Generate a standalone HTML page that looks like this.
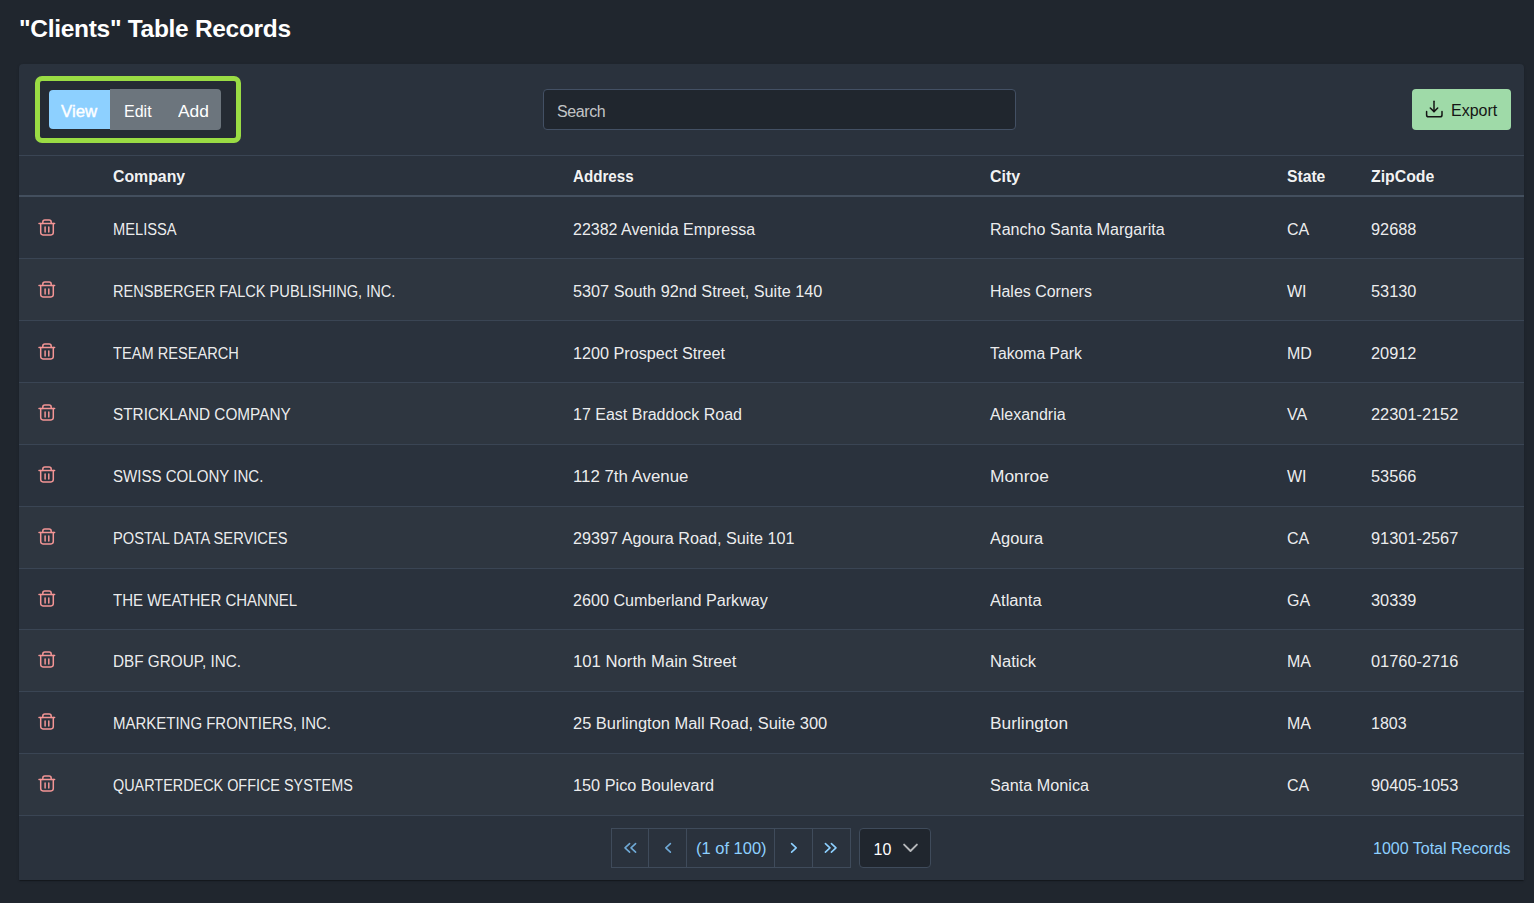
<!DOCTYPE html>
<html><head><meta charset="utf-8"><style>
html,body{margin:0;padding:0;}
body{width:1534px;height:903px;background:#20262e;font-family:"Liberation Sans",sans-serif;position:relative;overflow:hidden;color:rgba(255,255,255,0.93);}
.a{position:absolute;white-space:nowrap;line-height:20px;height:20px;font-size:16px;}
.b{font-weight:700;}
.card{position:absolute;left:19px;top:64px;width:1505px;height:816px;background:#2a323d;border-radius:4px 4px 0 0;box-shadow:0 2px 1px -1px rgba(0,0,0,0.2),0 1px 1px 0 rgba(0,0,0,0.14),0 1px 3px 0 rgba(0,0,0,0.12);}
.hl{position:absolute;left:19px;width:1505px;height:1px;background:#3a4554;}
.stripe{position:absolute;left:19px;width:1505px;background:rgba(255,255,255,0.02);}
.ic{position:absolute;}
</style></head><body>

<div class="a b" style="left:19px;top:14.40px;font-size:24.5px;line-height:30px;height:30px;color:#fff;letter-spacing:-0.3px">&quot;Clients&quot; Table Records</div>
<div class="card"></div>
<div style="position:absolute;left:35px;top:76px;width:196px;height:57px;border:5px solid #9adc44;border-radius:7px;background:#252b34;"></div>
<div style="position:absolute;left:49px;top:90px;width:61px;height:39px;background:#8dd0ff;border-radius:4px 0 0 4px;"></div>
<div style="position:absolute;left:110px;top:89px;width:111px;height:41px;background:#6c757d;border-radius:0 4px 4px 0;"></div>
<div class="a" style="left:61px;top:101.50px;color:#fff;-webkit-text-stroke:0.4px #fff;transform:scaleX(1.05);transform-origin:0 0">View</div>
<div class="a" style="left:124px;top:101.50px;color:#fff;transform:scaleX(1.0);transform-origin:0 0">Edit</div>
<div class="a" style="left:177.5px;top:101.50px;color:#fff;transform:scaleX(1.085);transform-origin:0 0">Add</div>
<div style="position:absolute;left:543px;top:89px;width:471px;height:39px;border:1px solid #435064;border-radius:4px;background:#20262e;"></div>
<div class="a" style="left:557px;top:101.60px;color:rgba(255,255,255,0.74);letter-spacing:-0.4px">Search</div>
<div style="position:absolute;left:1412px;top:89px;width:99px;height:41px;background:#9fdaa8;border-radius:4px;"></div>
<svg class="ic" style="left:1424px;top:99px" width="20" height="20" viewBox="0 0 20 20" fill="none" stroke="#151515" stroke-width="1.5" stroke-linecap="round" stroke-linejoin="round"><path d="M10 2.2V12.6"/><path d="M6.3 9.0L10 12.6L13.7 9.0"/><path d="M2.6 12.4V15.9Q2.6 17.8 4.5 17.8H16.1Q18 17.8 18 15.9V12.4"/></svg>
<div class="a" style="left:1451px;top:101.40px;color:#151515">Export</div>
<div class="hl" style="top:155px"></div>
<div class="hl" style="top:195px;height:2px;background:#434f5e"></div>
<div class="a b" style="left:113px;top:166.80px;color:rgba(255,255,255,0.96);transform:scaleX(0.99);transform-origin:0 0">Company</div>
<div class="a b" style="left:573px;top:166.80px;color:rgba(255,255,255,0.96);transform:scaleX(0.947);transform-origin:0 0">Address</div>
<div class="a b" style="left:990px;top:166.80px;color:rgba(255,255,255,0.96);transform:scaleX(1);transform-origin:0 0">City</div>
<div class="a b" style="left:1287px;top:166.80px;color:rgba(255,255,255,0.96);transform:scaleX(0.98);transform-origin:0 0">State</div>
<div class="a b" style="left:1371px;top:166.80px;color:rgba(255,255,255,0.96);transform:scaleX(0.99);transform-origin:0 0">ZipCode</div>
<div class="hl" style="top:258px"></div>
<div class="ic" style="left:37px;top:218px;width:20px;height:20px"><svg width="20" height="20" viewBox="0 0 20 20" fill="none" stroke="#f39595" stroke-width="1.5" stroke-linecap="round" stroke-linejoin="round"><path d="M2.0 5.6H17.6"/><path d="M5.8 5.6V4.2Q5.8 2.1 7.9 2.1H12.1Q14.2 2.1 14.2 4.2V5.6"/><path d="M3.7 5.6V14.6Q3.7 16.9 6 16.9H14Q16.3 16.9 16.3 14.6V5.6"/><path d="M8.1 9.0V14.1M11.8 9.0V14.1"/></svg></div>
<div class="a" style="left:113px;top:220px;transform:scaleX(0.9170);transform-origin:0 0;">MELISSA</div>
<div class="a" style="left:573px;top:220px;">22382 Avenida Empressa</div>
<div class="a" style="left:990px;top:220px;transform:scaleX(1.0070);transform-origin:0 0;">Rancho Santa Margarita</div>
<div class="a" style="left:1287px;top:220px;">CA</div>
<div class="a" style="left:1371px;top:220px;transform:scaleX(1.0200);transform-origin:0 0;">92688</div>
<div class="stripe" style="top:259px;height:61px"></div>
<div class="hl" style="top:320px"></div>
<div class="ic" style="left:37px;top:280px;width:20px;height:20px"><svg width="20" height="20" viewBox="0 0 20 20" fill="none" stroke="#f39595" stroke-width="1.5" stroke-linecap="round" stroke-linejoin="round"><path d="M2.0 5.6H17.6"/><path d="M5.8 5.6V4.2Q5.8 2.1 7.9 2.1H12.1Q14.2 2.1 14.2 4.2V5.6"/><path d="M3.7 5.6V14.6Q3.7 16.9 6 16.9H14Q16.3 16.9 16.3 14.6V5.6"/><path d="M8.1 9.0V14.1M11.8 9.0V14.1"/></svg></div>
<div class="a" style="left:113px;top:282px;transform:scaleX(0.9127);transform-origin:0 0;">RENSBERGER FALCK PUBLISHING, INC.</div>
<div class="a" style="left:573px;top:282px;transform:scaleX(1.0155);transform-origin:0 0;">5307 South 92nd Street, Suite 140</div>
<div class="a" style="left:990px;top:282px;transform:scaleX(0.9960);transform-origin:0 0;">Hales Corners</div>
<div class="a" style="left:1287px;top:282px;">WI</div>
<div class="a" style="left:1371px;top:282px;transform:scaleX(1.0200);transform-origin:0 0;">53130</div>
<div class="hl" style="top:382px"></div>
<div class="ic" style="left:37px;top:342px;width:20px;height:20px"><svg width="20" height="20" viewBox="0 0 20 20" fill="none" stroke="#f39595" stroke-width="1.5" stroke-linecap="round" stroke-linejoin="round"><path d="M2.0 5.6H17.6"/><path d="M5.8 5.6V4.2Q5.8 2.1 7.9 2.1H12.1Q14.2 2.1 14.2 4.2V5.6"/><path d="M3.7 5.6V14.6Q3.7 16.9 6 16.9H14Q16.3 16.9 16.3 14.6V5.6"/><path d="M8.1 9.0V14.1M11.8 9.0V14.1"/></svg></div>
<div class="a" style="left:113px;top:344px;transform:scaleX(0.9130);transform-origin:0 0;">TEAM RESEARCH</div>
<div class="a" style="left:573px;top:344px;transform:scaleX(1.0120);transform-origin:0 0;">1200 Prospect Street</div>
<div class="a" style="left:990px;top:344px;transform:scaleX(0.9850);transform-origin:0 0;">Takoma Park</div>
<div class="a" style="left:1287px;top:344px;">MD</div>
<div class="a" style="left:1371px;top:344px;transform:scaleX(1.0200);transform-origin:0 0;">20912</div>
<div class="stripe" style="top:383px;height:61px"></div>
<div class="hl" style="top:444px"></div>
<div class="ic" style="left:37px;top:403px;width:20px;height:20px"><svg width="20" height="20" viewBox="0 0 20 20" fill="none" stroke="#f39595" stroke-width="1.5" stroke-linecap="round" stroke-linejoin="round"><path d="M2.0 5.6H17.6"/><path d="M5.8 5.6V4.2Q5.8 2.1 7.9 2.1H12.1Q14.2 2.1 14.2 4.2V5.6"/><path d="M3.7 5.6V14.6Q3.7 16.9 6 16.9H14Q16.3 16.9 16.3 14.6V5.6"/><path d="M8.1 9.0V14.1M11.8 9.0V14.1"/></svg></div>
<div class="a" style="left:113px;top:405px;transform:scaleX(0.9580);transform-origin:0 0;">STRICKLAND COMPANY</div>
<div class="a" style="left:573px;top:405px;">17 East Braddock Road</div>
<div class="a" style="left:990px;top:405px;">Alexandria</div>
<div class="a" style="left:1287px;top:405px;">VA</div>
<div class="a" style="left:1371px;top:405px;transform:scaleX(1.0220);transform-origin:0 0;">22301-2152</div>
<div class="hl" style="top:506px"></div>
<div class="ic" style="left:37px;top:465px;width:20px;height:20px"><svg width="20" height="20" viewBox="0 0 20 20" fill="none" stroke="#f39595" stroke-width="1.5" stroke-linecap="round" stroke-linejoin="round"><path d="M2.0 5.6H17.6"/><path d="M5.8 5.6V4.2Q5.8 2.1 7.9 2.1H12.1Q14.2 2.1 14.2 4.2V5.6"/><path d="M3.7 5.6V14.6Q3.7 16.9 6 16.9H14Q16.3 16.9 16.3 14.6V5.6"/><path d="M8.1 9.0V14.1M11.8 9.0V14.1"/></svg></div>
<div class="a" style="left:113px;top:467px;transform:scaleX(0.9415);transform-origin:0 0;">SWISS COLONY INC.</div>
<div class="a" style="left:573px;top:467px;transform:scaleX(1.0520);transform-origin:0 0;">112 7th Avenue</div>
<div class="a" style="left:990px;top:467px;transform:scaleX(1.0850);transform-origin:0 0;">Monroe</div>
<div class="a" style="left:1287px;top:467px;">WI</div>
<div class="a" style="left:1371px;top:467px;transform:scaleX(1.0200);transform-origin:0 0;">53566</div>
<div class="stripe" style="top:507px;height:61px"></div>
<div class="hl" style="top:568px"></div>
<div class="ic" style="left:37px;top:527px;width:20px;height:20px"><svg width="20" height="20" viewBox="0 0 20 20" fill="none" stroke="#f39595" stroke-width="1.5" stroke-linecap="round" stroke-linejoin="round"><path d="M2.0 5.6H17.6"/><path d="M5.8 5.6V4.2Q5.8 2.1 7.9 2.1H12.1Q14.2 2.1 14.2 4.2V5.6"/><path d="M3.7 5.6V14.6Q3.7 16.9 6 16.9H14Q16.3 16.9 16.3 14.6V5.6"/><path d="M8.1 9.0V14.1M11.8 9.0V14.1"/></svg></div>
<div class="a" style="left:113px;top:529px;transform:scaleX(0.9170);transform-origin:0 0;">POSTAL DATA SERVICES</div>
<div class="a" style="left:573px;top:529px;transform:scaleX(1.0120);transform-origin:0 0;">29397 Agoura Road, Suite 101</div>
<div class="a" style="left:990px;top:529px;transform:scaleX(1.0290);transform-origin:0 0;">Agoura</div>
<div class="a" style="left:1287px;top:529px;">CA</div>
<div class="a" style="left:1371px;top:529px;transform:scaleX(1.0220);transform-origin:0 0;">91301-2567</div>
<div class="hl" style="top:629px"></div>
<div class="ic" style="left:37px;top:589px;width:20px;height:20px"><svg width="20" height="20" viewBox="0 0 20 20" fill="none" stroke="#f39595" stroke-width="1.5" stroke-linecap="round" stroke-linejoin="round"><path d="M2.0 5.6H17.6"/><path d="M5.8 5.6V4.2Q5.8 2.1 7.9 2.1H12.1Q14.2 2.1 14.2 4.2V5.6"/><path d="M3.7 5.6V14.6Q3.7 16.9 6 16.9H14Q16.3 16.9 16.3 14.6V5.6"/><path d="M8.1 9.0V14.1M11.8 9.0V14.1"/></svg></div>
<div class="a" style="left:113px;top:591px;transform:scaleX(0.9390);transform-origin:0 0;">THE WEATHER CHANNEL</div>
<div class="a" style="left:573px;top:591px;transform:scaleX(1.0100);transform-origin:0 0;">2600 Cumberland Parkway</div>
<div class="a" style="left:990px;top:591px;transform:scaleX(1.0360);transform-origin:0 0;">Atlanta</div>
<div class="a" style="left:1287px;top:591px;">GA</div>
<div class="a" style="left:1371px;top:591px;transform:scaleX(1.0200);transform-origin:0 0;">30339</div>
<div class="stripe" style="top:630px;height:61px"></div>
<div class="hl" style="top:691px"></div>
<div class="ic" style="left:37px;top:650px;width:20px;height:20px"><svg width="20" height="20" viewBox="0 0 20 20" fill="none" stroke="#f39595" stroke-width="1.5" stroke-linecap="round" stroke-linejoin="round"><path d="M2.0 5.6H17.6"/><path d="M5.8 5.6V4.2Q5.8 2.1 7.9 2.1H12.1Q14.2 2.1 14.2 4.2V5.6"/><path d="M3.7 5.6V14.6Q3.7 16.9 6 16.9H14Q16.3 16.9 16.3 14.6V5.6"/><path d="M8.1 9.0V14.1M11.8 9.0V14.1"/></svg></div>
<div class="a" style="left:113px;top:652px;transform:scaleX(0.9560);transform-origin:0 0;">DBF GROUP, INC.</div>
<div class="a" style="left:573px;top:652px;transform:scaleX(1.0440);transform-origin:0 0;">101 North Main Street</div>
<div class="a" style="left:990px;top:652px;transform:scaleX(1.0380);transform-origin:0 0;">Natick</div>
<div class="a" style="left:1287px;top:652px;">MA</div>
<div class="a" style="left:1371px;top:652px;transform:scaleX(1.0220);transform-origin:0 0;">01760-2716</div>
<div class="hl" style="top:753px"></div>
<div class="ic" style="left:37px;top:712px;width:20px;height:20px"><svg width="20" height="20" viewBox="0 0 20 20" fill="none" stroke="#f39595" stroke-width="1.5" stroke-linecap="round" stroke-linejoin="round"><path d="M2.0 5.6H17.6"/><path d="M5.8 5.6V4.2Q5.8 2.1 7.9 2.1H12.1Q14.2 2.1 14.2 4.2V5.6"/><path d="M3.7 5.6V14.6Q3.7 16.9 6 16.9H14Q16.3 16.9 16.3 14.6V5.6"/><path d="M8.1 9.0V14.1M11.8 9.0V14.1"/></svg></div>
<div class="a" style="left:113px;top:714px;transform:scaleX(0.9360);transform-origin:0 0;">MARKETING FRONTIERS, INC.</div>
<div class="a" style="left:573px;top:714px;transform:scaleX(1.0280);transform-origin:0 0;">25 Burlington Mall Road, Suite 300</div>
<div class="a" style="left:990px;top:714px;transform:scaleX(1.0830);transform-origin:0 0;">Burlington</div>
<div class="a" style="left:1287px;top:714px;">MA</div>
<div class="a" style="left:1371px;top:714px;">1803</div>
<div class="stripe" style="top:754px;height:61px"></div>
<div class="hl" style="top:815px"></div>
<div class="ic" style="left:37px;top:774px;width:20px;height:20px"><svg width="20" height="20" viewBox="0 0 20 20" fill="none" stroke="#f39595" stroke-width="1.5" stroke-linecap="round" stroke-linejoin="round"><path d="M2.0 5.6H17.6"/><path d="M5.8 5.6V4.2Q5.8 2.1 7.9 2.1H12.1Q14.2 2.1 14.2 4.2V5.6"/><path d="M3.7 5.6V14.6Q3.7 16.9 6 16.9H14Q16.3 16.9 16.3 14.6V5.6"/><path d="M8.1 9.0V14.1M11.8 9.0V14.1"/></svg></div>
<div class="a" style="left:113px;top:776px;transform:scaleX(0.9000);transform-origin:0 0;">QUARTERDECK OFFICE SYSTEMS</div>
<div class="a" style="left:573px;top:776px;transform:scaleX(1.0170);transform-origin:0 0;">150 Pico Boulevard</div>
<div class="a" style="left:990px;top:776px;transform:scaleX(1.0120);transform-origin:0 0;">Santa Monica</div>
<div class="a" style="left:1287px;top:776px;">CA</div>
<div class="a" style="left:1371px;top:776px;transform:scaleX(1.0220);transform-origin:0 0;">90405-1053</div>
<div style="position:absolute;left:611px;top:828px;width:238px;height:38px;border:1px solid #3f4b5b;"></div>
<div style="position:absolute;left:648px;top:828px;width:1px;height:40px;background:#3f4b5b"></div>
<div style="position:absolute;left:686px;top:828px;width:1px;height:40px;background:#3f4b5b"></div>
<div style="position:absolute;left:774px;top:828px;width:1px;height:40px;background:#3f4b5b"></div>
<div style="position:absolute;left:812px;top:828px;width:1px;height:40px;background:#3f4b5b"></div>
<svg class="ic" style="left:620px;top:838px" width="20" height="20" viewBox="0 0 20 20" fill="none" stroke="#6fa9d6" stroke-width="1.6" stroke-linecap="round" stroke-linejoin="round"><path d="M9.6 5.6L5 9.8L9.6 14.1"/><path d="M15.6 5.6L11 9.8L15.6 14.1"/></svg>
<svg class="ic" style="left:658px;top:838px" width="20" height="20" viewBox="0 0 20 20" fill="none" stroke="#6fa9d6" stroke-width="1.6" stroke-linecap="round" stroke-linejoin="round"><path d="M12.4 5.6L7.8 9.8L12.4 14.1"/></svg>
<svg class="ic" style="left:784px;top:838px" width="20" height="20" viewBox="0 0 20 20" fill="none" stroke="#8dd0ff" stroke-width="1.6" stroke-linecap="round" stroke-linejoin="round"><path d="M7.6 5.6L12.2 9.8L7.6 14.1"/></svg>
<svg class="ic" style="left:821px;top:838px" width="20" height="20" viewBox="0 0 20 20" fill="none" stroke="#8dd0ff" stroke-width="1.6" stroke-linecap="round" stroke-linejoin="round"><path d="M4.4 5.6L9 9.8L4.4 14.1"/><path d="M10.4 5.6L15 9.8L10.4 14.1"/></svg>
<div class="a" style="left:695.5px;top:839.00px;color:#8dd0ff;transform:scaleX(1.03);transform-origin:0 0">(1 of 100)</div>
<div style="position:absolute;left:859px;top:828px;width:70px;height:38px;border:1px solid #3f4b5b;border-radius:4px;background:#20262e"></div>
<div class="a" style="left:873.5px;top:840.00px;color:#fff">10</div>
<svg class="ic" style="left:900px;top:838px" width="20" height="20" viewBox="0 0 20 20" fill="none" stroke="rgba(255,255,255,0.68)" stroke-width="1.9" stroke-linecap="round" stroke-linejoin="round"><path d="M4.1 6.6L10.5 13L16.9 6.6"/></svg>
<div class="a" style="left:1373px;top:839.00px;color:#8dd0ff">1000 Total Records</div>
</body></html>
